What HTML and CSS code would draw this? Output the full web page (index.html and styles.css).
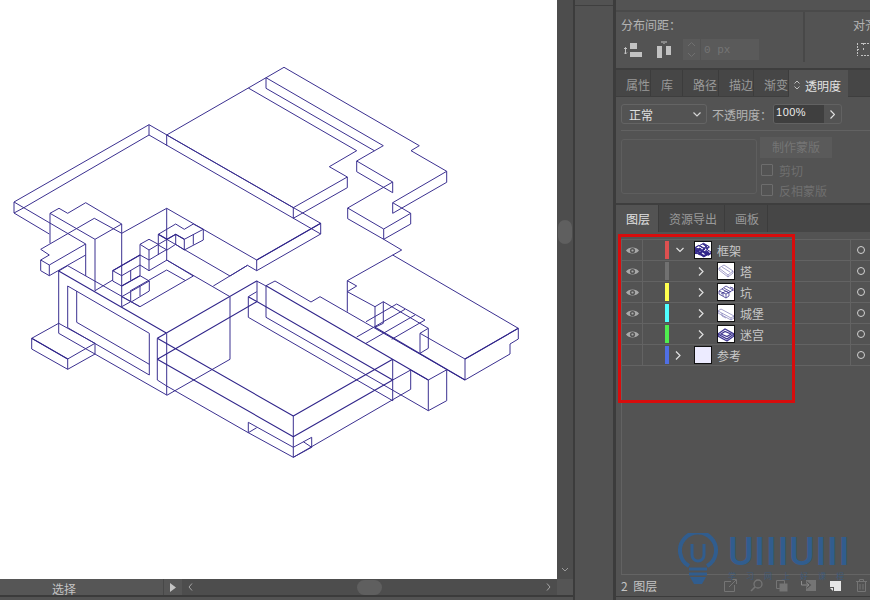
FILE: index.html
```html
<!DOCTYPE html>
<html lang="zh">
<head>
<meta charset="utf-8">
<title>图层</title>
<link rel="stylesheet" href="styles.css">
</head>
<body>
<div class="app">
  <div class="workspace">
    <div class="canvas-row">
      <main class="canvas">
        <svg class="drawing" width="557" height="579" viewBox="0 0 557 579">
          <g id="frame" fill="none">
            <path class="wire" d="M14 202L149 124.7L320.7 223.3V234L149 135L23.3 208M149 124.7V135M14 202V213L23.3 208M14 202L85.7 244M14 213L49.3 234
            M166.7 135L248.3 88L284 67.3L419.3 145.7L411 150.7L446.7 171.3V182.3L392.7 213.3V202.7L446.7 171.3M392.7 202.7L410.7 213.3V224L383.7 239.3V229L347.7 208V218.7L383.7 239.3M383.7 229L410.7 213.3M347.7 208L392.7 182V192.7L356.7 171.7V161L392.7 182M356.7 161L383.3 145.7L266 77.7V88.3L374.3 150.7M248.3 88L356.7 150.7L329.3 166.7L347.3 177V187.7L293.3 218.3V207.7L347.3 177M293.3 207.7L166.7 135V145.7
            M320.7 223.3L256.7 260V270.7L320.7 234M256.7 260L166.7 208.3L121.7 233.3M256.7 270.7L247.5 265.3L213.3 286M166.7 208.3V260
            M383.7 239.3L401.7 250L347.3 280.7L356.7 286L347.3 291.7V311.7M347.3 280.7V291.7M392.7 255L518.3 328.3V339L510 344V354L465 380V359L518.3 328.3M347.3 291.7L375 306.7V327.3L383.3 323.3V301.7L375 306.7M383.3 301.7L428.3 328.3L420 333.3L465 359M396.7 304L425 320M396.7 304L366 321.7M405 309.3L356.7 337M415 315L366 343.3M425 320L391.7 339.3M420 333.3V353.3L428.3 348.3V328.3
            M266 285.7L275 281L311 302L320 296.7L465 380M428.3 380V410.7L446.7 400.7V369.8L428.3 380L410.7 370M266 317.3L428.3 410.7M266 285.7V317.3
            M50 213.3L59 208.3L67.7 213.3L85.7 202.7L121.7 224L95 239.3L50 213.3V243.3M95 239.3V290.7L112.7 280M85.7 244V276M94.3 218.3L40.7 249.3L49.3 255L40.7 260V270.7L49.3 275.7L85.7 255M40.7 260L49.3 265L85.7 244M49.3 265V275.7M94.3 218.3L121.7 233.3M121.7 224V306.7
            M158.3 234.3L175.7 224L184.3 229.3L193.3 224L203.3 229.3V240L184.3 250V239.3L175.7 234.3L167 239.3L158.3 234.3V245L167 250L175.7 244.3V234.3M184.3 239.3L203.3 229.3M184.3 250L175.7 244.3M193.3 234.3V244.7
            M140 244.3L149 239.3L158.3 244.3M140 244.3L149 250V270.7L167 260M149 250L167 239.3M140 255L149 260L167 249.3M158.3 245V255M140 244.3V265L149 270.7
            M112.7 270.7L140 255M112.7 270.7V281L121.7 286L140 275.7M112.7 270.7L121.7 275.7L140 265M130.7 270V280M140 265V275.7L149.3 281V291L131.7 301.7M121.7 296.7L149.3 281M121.7 296.7L140 306.7M121.7 306.7L130.7 301.7V291.7M140 286V296M140 306.7L193.3 276M130 291L166.7 270L185 280.3M166.7 260L193.3 276M166.7 239.3L230 276M230 276L247.5 265.3M166.7 260L230 296.7
            M58.7 271L67.7 265.7L140 306.7M58.7 271V333.3L166.7 395M67.7 286V327.7L149.3 375V333.3L67.7 286M76.7 291V322.3L149.3 364.3M58.7 323.3L31.7 338.3L67.7 359L95 343.3V354L67.7 369.3L31.7 349V338.3M67.7 359V369.3M58.7 323.3L95 343.3
            M230 296.7V359.3L166.7 395.4M166.7 333.3V395M157.3 338.3V380L166.7 386M166.7 386L248.3 432.7V422.3L293.3 447.3M248.3 432.7L256.7 427.7M248.3 432.7L293.3 457.3M293.3 416V457.3L311.7 447.3V437.3L293.3 447.3M303.3 441.7L311.7 447.3M293.3 457.3L410.7 389.3V370M392.7 359.3V401M248.3 296.7V317.3L392.7 400.7M248.3 296.7L256.7 291.7M257 280.7V301.7M256.7 281L266 286M392.7 380L410.7 370"/>
            <path class="wire heavy" d="M266 285.7L428.3 380M248.300 296.700L392.7 380M157.3 338.3L293.3 416M157.3 359.3L293.3 436.7M293.3 416L392.7 359.3M293.3 436.7L392.7 380M157.3 338.3L256.7 281M157.3 359.3L256.7 301.7M58.7 271L166.7 333.3M375 327.3L465 380M465 359L518.3 328.3M31.7 338.3L67.7 359M121.7 286L140 275.7M112.7 270.7L140 255M158.3 234.3L167 239.3L175.7 234.3L184.3 239.3M256.7 260L320.7 223.3"/>
          </g>
        </svg>
      </main>
      <div class="vscroll">
        <div class="vthumb"></div>
        <svg class="vchev" width="8" height="5" viewBox="0 0 8 5"><path d="M1 1L4 4L7 1" fill="none" stroke="#9a9a9a"/></svg>
      </div>
    </div>
    <div class="status">
      <div class="status-label">选择</div>
      <div class="status-arrow"><svg width="6" height="9" viewBox="0 0 6 9"><path d="M0 0L6 4.500L0 9Z" fill="#c4c4c4"/></svg></div>
      <div class="hscroll">
        <svg class="hchev" width="5" height="8" viewBox="0 0 5 8"><path d="M4 .5L1 4L4 7.500" fill="none" stroke="#a5a5a5"/></svg>
        <div class="hthumb"></div>
        <svg class="hchev" width="5" height="8" viewBox="0 0 5 8"><path d="M1 .5L4 4L1 7.500" fill="none" stroke="#a5a5a5"/></svg>
      </div>
      <div class="status-end"></div>
    </div>
    <div class="status-foot"></div>
  </div>

  <div class="dock-strip"><div class="dock-cell"></div></div>

  <aside class="panel">
    <section class="align-sec">
      <div class="align-rule"></div>
      <div class="align-body">
        <div class="align-left">
          <div class="label">分布间距：</div>
          <div class="dist-row">
            <svg class="dist-icon" width="18" height="16" viewBox="0 0 18 16">
              <path d="M6 1h7v6H6zM6 10h12v5H6z" fill="#c2c2c2"/>
              <path d="M1.500 5.500V12M0 7l1.500-1.500L3 7M0 10.500L1.500 12L3 10.500" fill="none" stroke="#c2c2c2"/>
            </svg>
            <svg class="dist-icon gap-icon" width="15" height="17" viewBox="0 0 15 17">
              <path d="M0 5h5v12H0zM9 5h5v9H9z" fill="#c2c2c2"/>
              <path d="M4 1h2M8 1h2M7 0v3" fill="none" stroke="#c2c2c2"/>
            </svg>
            <div class="spin">
              <div class="spin-arrows">
                <svg width="9" height="17" viewBox="0 0 9 17"><path d="M1 5L4.500 1.500L8 5M1 12L4.500 15.500L8 12" fill="none" stroke="#707070"/></svg>
              </div>
              <span class="spin-text">0 px</span>
            </div>
          </div>
        </div>
        <div class="align-right">
          <div class="label">对齐</div>
          <svg class="grid-icon" width="13" height="13" viewBox="0 0 13 13"><path d="M.5 0V13M6.500 0V2M.5 6.500H2M4 .5H13M4 12.500H13M6.500 5V8" fill="none" stroke="#c2c2c2" stroke-dasharray="2 1"/></svg>
        </div>
      </div>
    </section>

    <nav class="tabs upper">
      <div class="tab w35">属性</div>
      <div class="tab w32">库</div>
      <div class="tab w36">路径</div>
      <div class="tab w35">描边</div>
      <div class="tab w35">渐变</div>
      <div class="tab active w59">
        <svg class="updown" width="6" height="10" viewBox="0 0 6 10"><path d="M.5 3.500L3 1L5.500 3.500M.5 6.500L3 9L5.500 6.500" fill="none" stroke="#c0c0c0"/></svg>
        <span>透明度</span>
      </div>
    </nav>

    <section class="opacity-sec">
      <div class="opacity-row">
        <div class="select">
          <span>正常</span>
          <svg width="8" height="5" viewBox="0 0 8 5"><path d="M.5 .5L4 4L7.500 .5" fill="none" stroke="#d5d5d5" stroke-width="1.200"/></svg>
        </div>
        <span class="label">不透明度：</span>
        <div class="pct">
          <div class="pct-value">100%</div>
          <div class="pct-btn"><svg width="5" height="9" viewBox="0 0 5 9"><path d="M.5 .5L4.500 4.500L.5 8.500" fill="none" stroke="#e0e0e0" stroke-width="1.200"/></svg></div>
        </div>
      </div>
      <div class="opacity-rule"></div>
      <div class="mask-row">
        <div class="mask-box"></div>
        <div class="mask-side">
          <div class="mask-btn">制作蒙版</div>
          <label class="check"><i></i>剪切</label>
          <label class="check"><i></i>反相蒙版</label>
        </div>
      </div>
    </section>

    <nav class="tabs lower">
      <div class="tab active w43">图层</div>
      <div class="tab w66">资源导出</div>
      <div class="tab w43">画板</div>
    </nav>

    <section class="layers-sec">
      <div class="layer-list">
        <div class="layer-rows">
          <div class="layer">
            <div class="eye"><svg width="13" height="9" viewBox="0 0 13 9"><path d="M0 4.500C2.500 .5 10.500 .5 13 4.500C10.500 8.500 2.500 8.500 0 4.500Z" fill="#a9a9a9"/><circle cx="6.500" cy="4.500" r="2.600" fill="#555"/><circle cx="6.500" cy="4.500" r="1.100" fill="#a9a9a9"/></svg></div>
            <div class="lock"></div><div class="swatch red"></div>
            <div class="name depth0">
              <svg class="toggle" width="10" height="6" viewBox="0 0 10 6"><path d="M1.500 1L5 4.500L8.500 1" fill="none" stroke="#e0e0e0" stroke-width="1.200"/></svg>
              <svg class="thumb" width="18" height="18" viewBox="10 60 515 400"><use href="#frame"/></svg>
              <span>框架</span>
            </div>
            <div class="target"><i></i></div>
          </div>
          <div class="layer">
            <div class="eye"><svg width="13" height="9" viewBox="0 0 13 9"><path d="M0 4.500C2.500 .5 10.500 .5 13 4.500C10.500 8.500 2.500 8.500 0 4.500Z" fill="#a9a9a9"/><circle cx="6.500" cy="4.500" r="2.600" fill="#555"/><circle cx="6.500" cy="4.500" r="1.100" fill="#a9a9a9"/></svg></div>
            <div class="lock"></div><div class="swatch gray"></div>
            <div class="name depth1">
              <svg class="toggle" width="10" height="9" viewBox="0 0 10 9"><path d="M3 .5L7 4.500L3 8.500" fill="none" stroke="#e0e0e0" stroke-width="1.200"/></svg>
              <svg class="thumb" width="18" height="18" viewBox="0 0 18 18"><path class="mini" d="M2 6L7 3L16 9L11 13ZM2 6V8L11 15V13M16 9V11L11 15M5 5L13 10"/></svg>
              <span>塔</span>
            </div>
            <div class="target"><i></i></div>
          </div>
          <div class="layer">
            <div class="eye"><svg width="13" height="9" viewBox="0 0 13 9"><path d="M0 4.500C2.500 .5 10.500 .5 13 4.500C10.500 8.500 2.500 8.500 0 4.500Z" fill="#a9a9a9"/><circle cx="6.500" cy="4.500" r="2.600" fill="#555"/><circle cx="6.500" cy="4.500" r="1.100" fill="#a9a9a9"/></svg></div>
            <div class="lock"></div><div class="swatch yellow"></div>
            <div class="name depth1">
              <svg class="toggle" width="10" height="9" viewBox="0 0 10 9"><path d="M3 .5L7 4.500L3 8.500" fill="none" stroke="#e0e0e0" stroke-width="1.200"/></svg>
              <svg class="thumb" width="18" height="18" viewBox="0 0 18 18"><path class="mini dense" d="M2 8L9 3L16 7L9 11ZM2 8V11L9 15L12 13V9M5 6L12 10M7 5L14 9M4 11L9 8L12 10M6 13V9M9 11V15M13 4L16 5V8"/></svg>
              <span>坑</span>
            </div>
            <div class="target"><i></i></div>
          </div>
          <div class="layer">
            <div class="eye"><svg width="13" height="9" viewBox="0 0 13 9"><path d="M0 4.500C2.500 .5 10.500 .5 13 4.500C10.500 8.500 2.500 8.500 0 4.500Z" fill="#a9a9a9"/><circle cx="6.500" cy="4.500" r="2.600" fill="#555"/><circle cx="6.500" cy="4.500" r="1.100" fill="#a9a9a9"/></svg></div>
            <div class="lock"></div><div class="swatch cyan"></div>
            <div class="name depth1">
              <svg class="toggle" width="10" height="9" viewBox="0 0 10 9"><path d="M3 .5L7 4.500L3 8.500" fill="none" stroke="#e0e0e0" stroke-width="1.200"/></svg>
              <svg class="thumb" width="18" height="18" viewBox="0 0 18 18"><path class="mini" d="M1 7L4 5L17 12V14L14 16L1 9ZM1 7L14 14V16M14 14L17 12M5 9V12L9 14"/></svg>
              <span>城堡</span>
            </div>
            <div class="target"><i></i></div>
          </div>
          <div class="layer">
            <div class="eye"><svg width="13" height="9" viewBox="0 0 13 9"><path d="M0 4.500C2.500 .5 10.500 .5 13 4.500C10.500 8.500 2.500 8.500 0 4.500Z" fill="#a9a9a9"/><circle cx="6.500" cy="4.500" r="2.600" fill="#555"/><circle cx="6.500" cy="4.500" r="1.100" fill="#a9a9a9"/></svg></div>
            <div class="lock"></div><div class="swatch green"></div>
            <div class="name depth1">
              <svg class="toggle" width="10" height="9" viewBox="0 0 10 9"><path d="M3 .5L7 4.500L3 8.500" fill="none" stroke="#e0e0e0" stroke-width="1.200"/></svg>
              <svg class="thumb" width="18" height="18" viewBox="0 0 18 18"><path class="mini heavy-mini" d="M1 9L8 4L17 9L10 14ZM4 9L8 6.500L14 9L10 11.500ZM1 9V11L10 16L17 11V9"/></svg>
              <span>迷宫</span>
            </div>
            <div class="target"><i></i></div>
          </div>
          <div class="layer">
            <div class="eye"></div>
            <div class="lock"></div><div class="swatch blue"></div>
            <div class="name depth-ref">
              <svg class="toggle" width="10" height="9" viewBox="0 0 10 9"><path d="M3 .5L7 4.500L3 8.500" fill="none" stroke="#e0e0e0" stroke-width="1.200"/></svg>
              <svg class="thumb ref" width="18" height="18" viewBox="0 0 18 18"></svg>
              <span>参考</span>
            </div>
            <div class="target"><i></i></div>
          </div>
        </div>
        <div class="watermark">
          <svg class="bulb" width="40" height="52" viewBox="0 0 40 52">
            <path d="M11 33A18 18 0 1 1 29 33" fill="none" stroke="#315d8e" stroke-width="4"/>
            <path d="M14 11V22A6 6 0 0 0 26 22V11" fill="none" stroke="#315d8e" stroke-width="3"/>
            <path d="M11 36H29M11 41H29" stroke="#315d8e" stroke-width="3"/>
            <path d="M12 44H28L24 51H16Z" fill="#315d8e"/>
          </svg>
          <div class="wm-text">
            <div class="wm-logo">UIIIUIII</div>
            <div class="wm-sub">学习网上好课程</div>
          </div>
        </div>
      </div>
      <footer class="layer-foot">
        <span class="count">2 图层</span>
        <div class="foot-icons">
          <svg width="13" height="13" viewBox="0 0 13 13"><path d="M7 2.500H.5V12.500H10.500V6M5 8L12 1M8 .5H12.500V5" fill="none" stroke="#757575"/></svg>
          <svg width="13" height="13" viewBox="0 0 13 13"><circle cx="8" cy="5" r="4" fill="none" stroke="#757575" stroke-width="1.300"/><path d="M5 8L1 12" stroke="#757575" stroke-width="1.600"/></svg>
          <svg width="12" height="12" viewBox="0 0 12 12"><path d="M.5 .5H8.500V8.500H.5Z" fill="none" stroke="#757575"/><path d="M3.500 3.500H11.500V11.500H3.500Z" fill="#757575"/></svg>
          <svg width="15" height="11" viewBox="0 0 15 11"><path d="M5 0H15V11H5Z" fill="#757575"/><path d="M0 1V5H7M5 2.500L8 5L5 7.500" fill="none" stroke="#555" stroke-width="3"/><path d="M.5 1V5H7M5 2.500L8 5L5 7.500" fill="none" stroke="#8a8a8a"/></svg>
          <svg class="foot-new" width="11" height="10" viewBox="0 0 11 10"><path d="M0 0H11V10H4V6H0Z" fill="#e6e6e6"/><path d="M0 7H3V10Z" fill="#e6e6e6"/></svg>
          <svg width="11" height="13" viewBox="0 0 11 13"><path d="M0 2.500H11M3.500 2.500V.5H7.500V2.500M1.500 2.500V12.500H9.500V2.500M4 5V10.500M7 5V10.500" fill="none" stroke="#757575"/></svg>
        </div>
      </footer>
    </section>
    <div class="status-foot"></div>
  </aside>
</div>

<div class="callout"></div>
</body>
</html>
```

FILE: styles.css
```css
* { box-sizing: border-box; }

html, body {
  margin: 0;
  height: 100%;
  overflow: hidden;
  background: #535353;
}

body {
  font-family: "Noto Sans CJK SC", "Noto Sans", sans-serif;
  font-size: 12px;
  color: #b8b8b8;
}

.app {
  display: flex;
  width: 870px;
  height: 600px;
}

/* Left workspace */
.workspace {
  display: flex;
  flex: none;
  flex-direction: column;
  width: 573px;
  height: 600px;
}

.canvas-row {
  display: flex;
  flex: none;
  height: 579px;
}

.canvas {
  flex: none;
  width: 557px;
  background: #fff;
}

.drawing { display: block; }

.wire {
  stroke: #3b3090;
  stroke-width: 1;
  vector-effect: non-scaling-stroke;
}

.wire.heavy {
  stroke: #30258a;
  stroke-width: 1.100;
}

.vscroll {
  position: relative;
  flex: none;
  width: 16px;
  background: #4d4d4d;
}

.vthumb {
  position: absolute;
  top: 220px;
  left: 1px;
  width: 14px;
  height: 24px;
  border-radius: 7px;
  background: #5f5f5f;
}

.vchev {
  position: absolute;
  left: 4px;
  bottom: 7px;
}

.status {
  display: flex;
  flex: none;
  height: 17px;
  background: #4d4d4d;
  border-bottom: 1px solid #3b3b3b;
}

.status-label {
  flex: none;
  width: 164px;
  padding: 3px 0 0 52px;
  line-height: 14px;
  background: #565656;
  border-right: 1px solid #484848;
  color: #c4c4c4;
}

.status-arrow {
  display: flex;
  flex: none;
  align-items: center;
  width: 18px;
  padding-left: 6px;
  background: #565656;
}

.hscroll {
  display: flex;
  align-items: center;
  justify-content: space-between;
  flex: 1;
  padding: 0 6px;
}

.hthumb {
  width: 25px;
  height: 15px;
  border-radius: 8px;
  background: #5f5f5f;
}

.status-end {
  flex: none;
  width: 16px;
  background: #555;
}

.status-foot {
  flex: 1;
  background: #535353;
  border-top: 1px solid #3b3b3b;
}

/* Narrow dock column */
.dock-strip {
  flex: none;
  width: 43px;
  border-left: 2px solid #3c3c3c;
  border-right: 3px solid #3c3c3c;
  background: #525252;
}

.dock-cell {
  height: 6px;
  border-bottom: 1px solid #3f3f3f;
}

/* Right panel */
.panel {
  display: flex;
  flex: none;
  flex-direction: column;
  width: 254px;
  height: 600px;
  background: #535353;
}

.panel .status-foot {
  flex: none;
  height: 4px;
}

.label { color: #b4b4b4; }

.align-sec {
  flex: none;
  height: 70px;
  border-bottom: 2px solid #3e3e3e;
}

.align-rule {
  height: 12px;
  border-bottom: 2px solid #4a4a4a;
}

.align-body {
  display: flex;
  height: 56px;
  padding-left: 5px;
}

.align-left {
  flex: none;
  width: 184px;
  padding-top: 4px;
  border-right: 2px solid #484848;
  margin-bottom: 6px;
}

.align-left .label { line-height: 18px; }

.dist-row {
  display: flex;
  align-items: center;
  height: 21px;
  margin-top: 5px;
}

.dist-icon { margin-left: 3px; }
.gap-icon { margin-left: 15px; }

.spin {
  display: flex;
  align-items: center;
  width: 76px;
  height: 21px;
  margin-left: 11px;
  background: #5a5a5a;
}

.spin-arrows {
  display: flex;
  justify-content: center;
  width: 18px;
  height: 21px;
  padding-top: 2px;
  border-right: 1px solid #535353;
}

.spin-text {
  margin-left: 3px;
  font-family: "Liberation Mono", monospace;
  font-size: 11px;
  color: #757575;
}

.align-right {
  padding: 4px 0 0 48px;
  overflow: hidden;
  white-space: nowrap;
}

.align-right .label { line-height: 18px; }

.grid-icon {
  display: block;
  margin: 9px 0 0 4px;
}

/* Tabs */
.tabs {
  display: flex;
  flex: none;
  background: #464646;
}

.tabs.upper {
  height: 27px;
  border-bottom: 1px solid #3e3e3e;
}

.tabs.lower {
  height: 27px;
}

.tab {
  display: flex;
  align-items: center;
  padding-left: 10px;
  border-right: 1px solid #3c3c3c;
  color: #999;
}

.upper .tab { padding-top: 3px; }

.tab.active {
  height: 100%;
  background: #535353;
  color: #e2e2e2;
}

.upper .tab.active {
  height: 27px;
  padding-left: 5px;
  border-right: none;
}

.lower .tab.active { border-right: 1px solid #3c3c3c; }

.updown { margin-right: 5px; }

.w32 { width: 32px; }
.w35 { width: 35px; }
.w36 { width: 36px; }
.w43 { width: 43px; }
.w59 { width: 59px; }
.w66 { width: 66px; }

/* Opacity */
.opacity-sec {
  flex: none;
  height: 108px;
  padding: 7px 0 0 5px;
  border-bottom: 2px solid #3e3e3e;
}

.opacity-row {
  display: flex;
  align-items: center;
  height: 20px;
}

.select {
  display: flex;
  flex: none;
  align-items: center;
  justify-content: space-between;
  width: 86px;
  height: 20px;
  padding: 0 5px 0 7px;
  border: 1px solid #646464;
  border-radius: 3px;
  color: #e0e0e0;
}

.opacity-row .label { margin-left: 5px; }

.pct {
  display: flex;
  flex: none;
  height: 20px;
  margin-left: 1px;
  border: 1px solid #626262;
  border-radius: 3px;
  overflow: hidden;
}

.pct-value {
  width: 50px;
  padding-left: 2px;
  font-family: "Liberation Sans", sans-serif;
  font-size: 11px;
  line-height: 15px;
  letter-spacing: .5px;
  color: #ececec;
  background: #3f3f3f;
}

.pct-btn {
  display: flex;
  align-items: center;
  justify-content: center;
  width: 17px;
}

.opacity-rule {
  height: 1px;
  margin-top: 6px;
  background: #626262;
}

.mask-row {
  display: flex;
  margin-top: 6px;
}

.mask-box {
  flex: none;
  width: 136px;
  height: 55px;
  margin-top: 2px;
  border: 1px solid #5e5e5e;
  border-radius: 3px;
}

.mask-side { margin-left: 3px; }

.mask-btn {
  width: 72px;
  height: 21px;
  line-height: 20px;
  text-align: center;
  background: #5a5a5a;
  color: #757575;
}

.check {
  display: flex;
  align-items: center;
  height: 20px;
  color: #6f6f6f;
}

.check i {
  width: 12px;
  height: 12px;
  margin: 0 6px 0 1px;
  border: 1px solid #6d6d6d;
  border-radius: 1px;
}

.mask-btn + .check { margin-top: 2px; }

/* Layers */
.layers-sec {
  display: flex;
  flex: none;
  flex-direction: column;
  height: 364px;
  padding: 7px 0 0 5px;
}

.layer-list {
  position: relative;
  flex: none;
  height: 336px;
  border-left: 1px solid #626262;
  border-top: 1px solid #626262;
  border-bottom: 1px solid #646464;
}

.layer {
  display: flex;
  height: 21px;
  border-bottom: 1px solid #636363;
}

.eye {
  display: flex;
  flex: none;
  align-items: center;
  justify-content: center;
  width: 21px;
  border-right: 1px solid #636363;
}

.lock { flex: none; width: 22px; }

.swatch {
  flex: none;
  width: 4px;
  margin: 1px 0;
}

.red { background: #dd5050; }
.gray { background: #717171; }
.yellow { background: #ffff4f; }
.cyan { background: #4fffff; }
.green { background: #4fee4f; }
.blue { background: #4f6fe4; }

.name {
  display: flex;
  flex: 1;
  align-items: center;
  color: #c8c8c8;
}

.depth0 { padding-left: 6px; }
.depth1 { padding-left: 27px; }
.depth-ref { padding-left: 4px; }

.toggle { flex: none; margin-right: 9px; }
.depth1 .toggle, .depth-ref .toggle { margin-right: 11px; }

.thumb {
  flex: none;
  margin-right: 5px;
  background: #fff;
  outline: 1px solid #111;
  outline-offset: -1px;
}

.thumb.ref { background: #ecebff; }

.mini {
  fill: none;
  stroke: #7d78b5;
  stroke-width: .7;
}

.mini.dense { stroke: #3f3690; stroke-width: .8; }
.mini.heavy-mini { stroke: #3f3690; stroke-width: 1.300; }

.target {
  display: flex;
  flex: none;
  align-items: center;
  justify-content: center;
  width: 20px;
  border-left: 1px solid #636363;
}

.target i {
  width: 8px;
  height: 8px;
  border: 1px solid #d2d2d2;
  border-radius: 50%;
}

.watermark {
  position: absolute;
  top: 293px;
  left: 56px;
  display: flex;
  pointer-events: none;
}

.wm-text { margin-left: 10px; }

.wm-logo {
  font-family: Roboto, sans-serif;
  font-size: 39px;
  font-weight: 500;
  line-height: 38px;
  letter-spacing: .6px;
  color: #315d8e;
  white-space: nowrap;
}

.wm-sub {
  font-size: 8px;
  line-height: 9px;
  letter-spacing: 10px;
  color: #3f5a78;
  white-space: nowrap;
}

.layer-foot {
  display: flex;
  flex: none;
  align-items: center;
  height: 21px;
}

.count {
  flex: none;
  width: 36px;
  color: #c4c4c4;
  word-spacing: 3px;
  white-space: nowrap;
}

.foot-icons {
  display: flex;
  align-items: center;
  margin-left: 67px;
  gap: 13px;
}

.foot-new { margin-left: 1px; margin-right: 2px; }

/* Red annotation box over the layer list */
.callout {
  position: absolute;
  top: 234px;
  left: 618px;
  width: 177px;
  height: 169px;
  border: 3px solid #d80c0c;
}
```
